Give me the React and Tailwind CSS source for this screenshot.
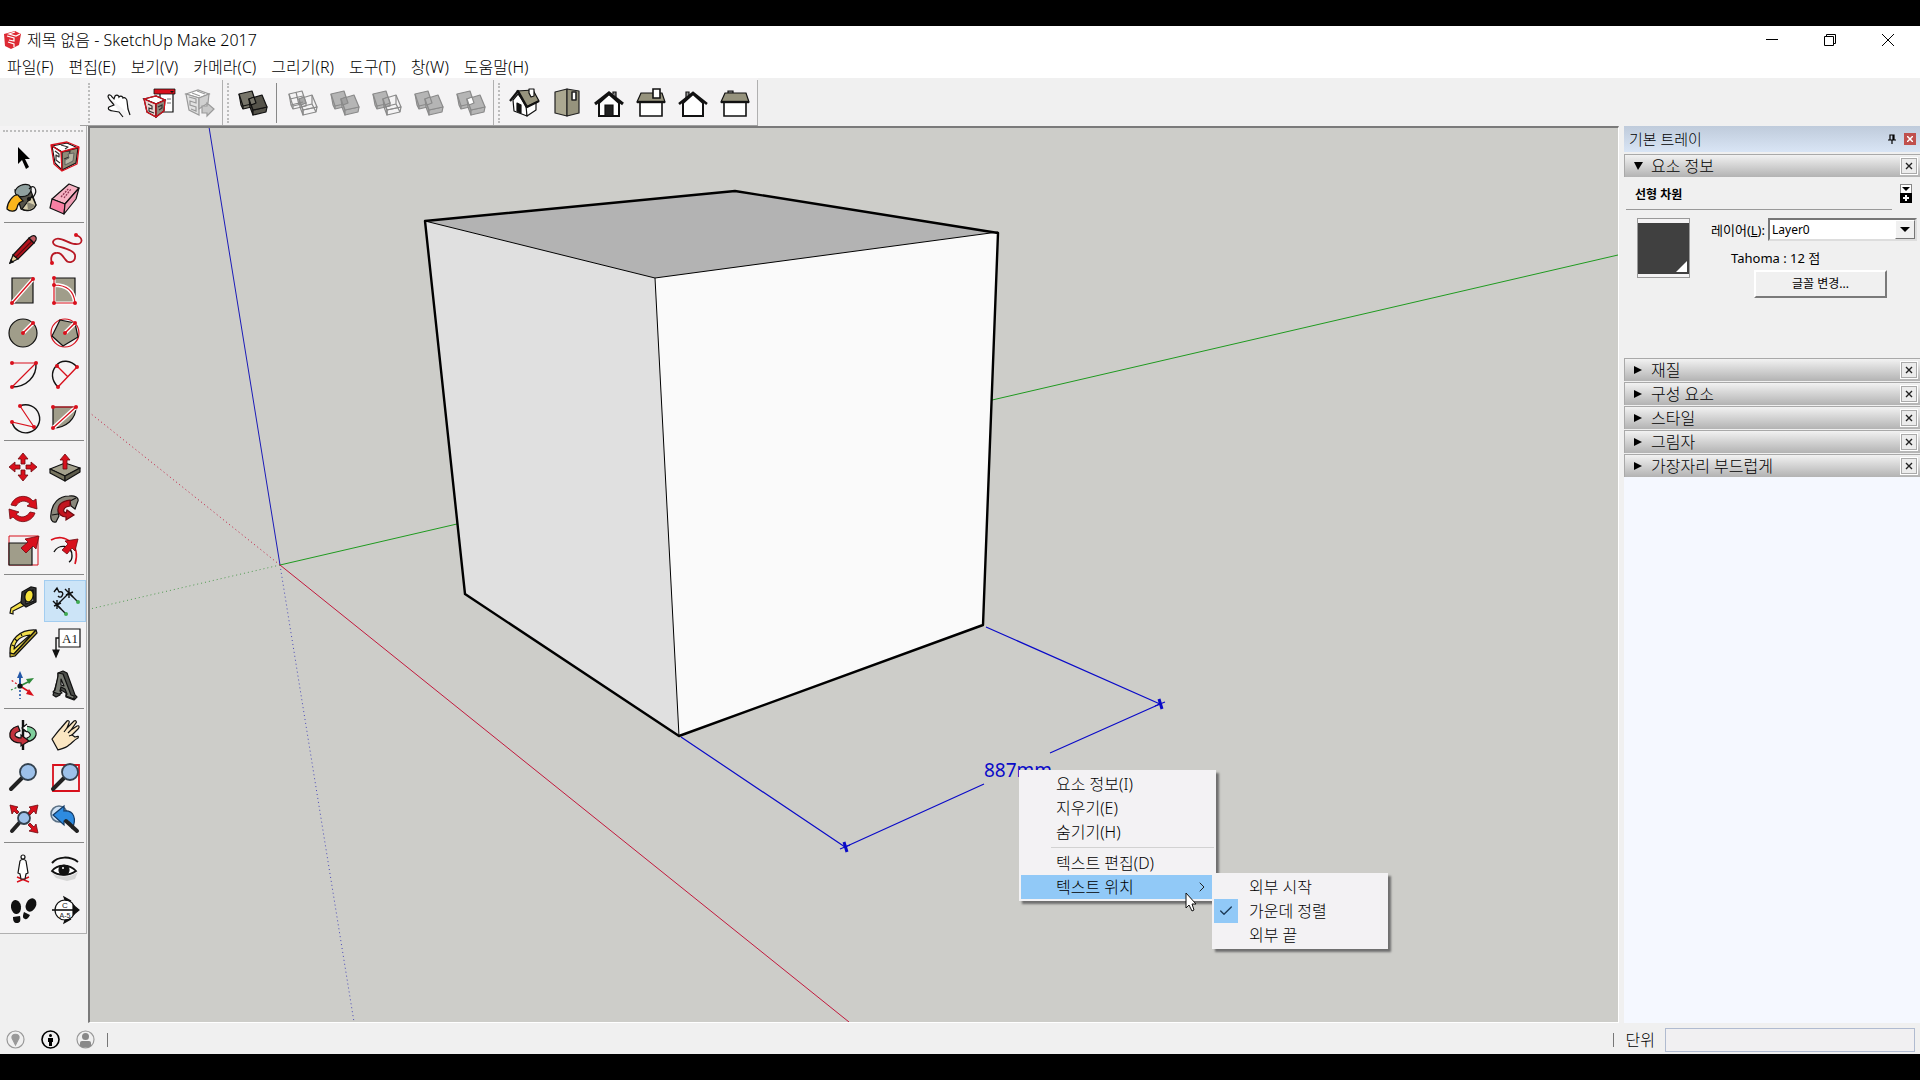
import React, { useState } from "react";
import { Check, ChevronRight } from "lucide-react";
import clsx from "clsx";

const RED = "#d8101c";
const OLIVE = "#a09d8a";

const MENUS = ["파일(F)", "편집(E)", "보기(V)", "카메라(C)", "그리기(R)", "도구(T)", "창(W)", "도움말(H)"];

const TRAY_SECTIONS = ["재질", "구성 요소", "스타일", "그림자", "가장자리 부드럽게"];

const Icon = ({ children }) => (
  <svg viewBox="0 0 42 42" className="w-full h-full" fill="none" stroke="#111" strokeWidth="1.2">
    {children}
  </svg>
);

const Dots = ({ points, r = 2 }) =>
  points.map(([x, y]) => <circle key={`${x}-${y}`} cx={x} cy={y} r={r} fill={RED} stroke="none" />);

/* ===== SOLID TOOLS ===== */
const SolidIcon = ({ back = "#b5b5b5", front = "#b5b5b5", overlap = "#b5b5b5", line = "#8a8a8a" }) => (
  <Icon>
    <g stroke={line} strokeLinejoin="round">
      <path d="M7 12l2 11 2 4 13-3v-3" fill={back} />
      <path d="M7 12l13-3 4 12-13 3z" fill={back} />
      <path d="M11 24v3" />
      <path d="M17 17l1 8 3 8v-5z" fill={front} />
      <path d="M21 28l14-3-1 5-13 3z" fill={front} />
      <path d="M17 17l13-4 5 12-14 3z" fill={front} />
      <path d="M17 17l5-2 2 6-5 2z" fill={overlap} />
      {back === "none" && <path d="M9 23l12-3M14 10l3 13M8 17l13-3" />}
      {front === "none" && <path d="M18 25l12-3 4 8M30 13v9" />}
    </g>
  </Icon>
);

const PointerHandIcon = () => (
  <Icon>
    <path
      d="M11 14c1-2 3-1 4 1l2 2 1-3c2-2 4 0 4 1 2-2 4 0 4 1 2-1 4 1 4 3l1 8 2 6M11 14c0 3 4 6 6 9l-5 2c-2 2 1 4 4 4l6 1 4 5"
      fill="#fff"
    />
  </Icon>
);

const WarehouseIcon = () => (
  <Icon>
    <path d="M21 11h13v19H21z" fill="#fff" />
    <path d="M15 7h21v5H15z" fill={RED} strokeWidth="0.8" />
    <path d="M31 9h4l-2 2z" fill="#111" stroke="none" />
    <path d="M28 17h4M28 21h4" stroke="#777" />
    <path d="M5 17l12-3 9 4-9 4z" fill="#fff" />
    <path d="M5 17l12 5v13L8 30z" fill="#e9d6d2" />
    <path d="M17 22l9-4-1 11-8 6z" fill="#8f887c" />
    <path d="M9 22l4 2v3l-3-1v3l5 2M19 25l4-2v3l-3 2" stroke="#333" />
    <path d="M5 17l12-3 9 4-1 11-8 6-9-5zM5 17l12 5 9-4M17 22v13" stroke={RED} />
  </Icon>
);

const ShareIcon = () => (
  <Icon>
    <g stroke="#9a9a9a">
      <path d="M5 12l12-4 11 4-10 4z" fill="#fff" />
      <path d="M5 12l13 4v17l-10-5z" fill="#e2e2e2" />
      <path d="M18 16l10-4-1 9-9 6z" fill="#d0d0d0" />
      <path d="M8 15l7 2v4l-6-2v4l6 2v4l-5-2M11 11l8 3M16 9l8 3" />
      <path d="M21 24h5v-3l7 6-7 7v-3h-5z" fill="#c8c8c8" />
    </g>
  </Icon>
);

/* ===== CAMERA VIEWS ===== */
const IsoViewIcon = () => (
  <Icon>
    <g strokeLinejoin="round">
      <path d="M9 18l5-6 9 12v10L10 29z" fill="#fff" />
      <path d="M22 24l10-5v9l-9 6z" fill="#fff" />
      <path d="M13 9l16-1 6 11-13 6z" fill="#96937d" />
      <path d="M6 19l8-10 9 16 12-6" strokeWidth="2.2" />
      <path d="M25 7h5v7l-3 1-2-4z" fill="#fff" />
      <path d="M13 21l4 2v8l-4-2z" fill="#111" />
    </g>
  </Icon>
);

const TopViewIcon = () => (
  <Icon>
    <g strokeLinejoin="round" stroke="#222">
      <path d="M9 10l12-3v27L9 31z" fill="#aba891" />
      <path d="M21 7l12 2v22l-12 3z" fill="#96937d" />
      <path d="M26 10h4v8h-4z" fill="#fff" strokeWidth="1.6" />
    </g>
  </Icon>
);

const FrontViewIcon = () => (
  <Icon>
    <path d="M25 12v-2h3v5" fill="#888" />
    <path d="M11 21l10-9 10 9v13H11z" fill="#fff" strokeWidth="2" />
    <path d="M7 22l14-11 14 11" strokeWidth="3" />
    <path d="M17 23h8v11h-8z" fill="#222" />
  </Icon>
);

const RightViewIcon = () => (
  <Icon>
    <path d="M10 20h22v14H10z" fill="#fff" strokeWidth="1.6" />
    <path d="M11 11h21l3 9H7z" fill="#96937d" />
    <path d="M7 20h28" strokeWidth="2.4" />
    <path d="M23 7h7v9h-7z" fill="#fff" strokeWidth="1.6" />
  </Icon>
);

const BackViewIcon = () => (
  <Icon>
    <path d="M14 17v-7h3v5" fill="#999" />
    <path d="M11 21l10-9 10 9v13H11z" fill="#fff" strokeWidth="2" />
    <path d="M7 22l14-11 14 11" strokeWidth="2.6" />
  </Icon>
);

const LeftViewIcon = () => (
  <Icon>
    <path d="M14 11v-2h5v2" fill="#888" />
    <path d="M10 20h22v14H10z" fill="#fff" strokeWidth="1.6" />
    <path d="M11 11h21l3 9H7z" fill="#96937d" />
    <path d="M7 20h28" strokeWidth="2.4" />
  </Icon>
);

/* ===== DRAWING TOOLS ===== */
const SelectIcon = () => (
  <Icon>
    <path d="M16 11v17l4-4 4 9 3-2-4-8h5z" fill="#000" stroke="none" />
  </Icon>
);

const ComponentIcon = () => (
  <Icon>
    <g strokeLinejoin="round">
      <path d="M8 10l15-3 11 5-16 4z" fill="#fff" />
      <path d="M8 10l10 6v18l-7-7z" fill="#fff" />
      <path d="M18 16l16-4-2 15-14 7z" fill="#8f8c78" />
      <path d="M11 15l4 3v3l-3-2v5l4 3M17 9l7 2-3 2M18 16l8-1-1 6-5 2" stroke="#333" />
      <path d="M24 18l6-1-1 8-8 4v-5l4-2z" fill="#b8b5a3" stroke="#555" strokeWidth="0.8" />
      <path d="M7 9l16-3 12 5-2 17-15 7-8-7zM7 9l10 7 18-5M17 16l1 19" stroke={RED} strokeWidth="1.3" />
    </g>
  </Icon>
);

const PaintIcon = () => (
  <Icon>
    <path d="M13 12l16 1 5 14c-3 6-10 7-15 4z" fill="#55534a" />
    <path d="M20 31l10-13 4 9c-2 5-8 7-14 4z" fill="#d8cfae" />
    <path d="M25 24l8 3c-2 3-4 4-7 5z" fill="#8a8674" stroke="none" />
    <path d="M13 14c1-6 9-9 14-7 3 2 3 7-1 10-5 3-12 2-13-3z" fill="#8fa09f" />
    <path d="M27 11c5-6 9 1 5 7l-5 3" />
    <circle cx="27" cy="21" r="1.500" fill="#111" />
    <path d="M16 17c-5-1-11 8-11 14 3 3 9 3 10-1 1-5 3-6 6-7z" fill="#fbb51c" />
  </Icon>
);

const EraserIcon = () => (
  <Icon>
    <g strokeLinejoin="round">
      <path d="M8 21L25 6l10 4-14 16z" fill="#f7b3c4" />
      <path d="M8 21l13 5-1 10-14-6z" fill="#f77fa3" />
      <path d="M21 26l14-16-3 11-12 15z" fill="#ee9db4" />
      <path d="M17 19l8-9M20 20l7-9" stroke="#8c3350" strokeDasharray="2 1" />
    </g>
  </Icon>
);

const PencilIcon = () => (
  <Icon>
    <path d="M8 35l3-8 5 4z" fill="#e7cf9c" />
    <path d="M11 27L27 10l5 5-16 16z" fill="#b3121c" />
    <path d="M14 29l16-16" stroke="#5a0b10" />
    <path d="M27 10l3-2c3-1 5 1 4 4l-2 3z" fill="#c05a62" />
    <path d="M8 35l1-3 2 2z" fill="#111" />
  </Icon>
);

const FreehandIcon = () => (
  <Icon>
    <path
      d="M32 7c8 3 7 10-1 9-6 0-13-7-19-5-5 2-3 6 1 7 6 2 17 4 18 9 1 8-7 9-10 4-3-4-5-7-9-6-4 0-6 5-4 10"
      stroke="#b81824"
      strokeWidth="1.8"
    />
    <Dots points={[[32, 7], [8, 35]]} />
  </Icon>
);

const RectangleIcon = () => (
  <Icon>
    <path d="M10 8h21v25H10z" fill={OLIVE} />
    <path d="M10 33L31 9" stroke="#fff" strokeWidth="4" />
    <path d="M10 33L31 9" stroke={RED} strokeWidth="1.4" />
    <Dots points={[[10, 33], [31, 9]]} />
  </Icon>
);

const RotatedRectIcon = () => (
  <Icon>
    <path d="M10 8h21v25H10z" fill={OLIVE} />
    <path d="M10 15c13 0 20 6 21 18" stroke="#fff" strokeWidth="4" />
    <path d="M10 8v25h21" stroke="#fff" strokeWidth="3" />
    <path d="M10 8v25h21c-1-12-8-18-21-18" stroke={RED} />
    <Dots points={[[10, 8], [10, 15], [10, 33], [31, 33]]} />
  </Icon>
);

const Radius = () => (
  <>
    <path d="M21 21l10-10" stroke="#fff" strokeWidth="4" />
    <path d="M21 21l10-10" stroke={RED} strokeWidth="1.4" />
    <Dots points={[[21, 21], [31, 11]]} />
  </>
);

const CircleIcon = () => (
  <Icon>
    <circle cx="21" cy="21" r="14" fill={OLIVE} />
    <Radius />
  </Icon>
);

const PolygonIcon = () => (
  <Icon>
    <circle cx="21" cy="21" r="14" stroke={RED} />
    <path d="M16 8l15 3 3 14-15 9L8 24z" fill={OLIVE} />
    <Radius />
  </Icon>
);

const ArcIcon = () => (
  <Icon>
    <path d="M34 9c1 14-10 24-24 24" strokeWidth="1.4" />
    <path d="M10 9h24L10 33" stroke={RED} />
    <Dots points={[[10, 9], [34, 9], [10, 33]]} />
  </Icon>
);

const TwoPointArcIcon = () => (
  <Icon>
    <path d="M33 13C27 6 17 5 12 12c-5 6-5 14 2 21" strokeWidth="1.4" />
    <path d="M13 12l11 11M33 13L14 33" stroke={RED} strokeWidth="1.4" />
    <Dots points={[[13, 12], [33, 13], [14, 33]]} />
  </Icon>
);

const ThreePointArcIcon = () => (
  <Icon>
    <path d="M18 10a14 14 0 1 1-8 16" strokeWidth="1.4" />
    <path d="M18 10l14 21-22-5" stroke={RED} />
    <Dots points={[[18, 10], [10, 26], [32, 31]]} />
  </Icon>
);

const PieIcon = () => (
  <Icon>
    <path d="M9 11h23c0 12-10 21-23 21z" fill={OLIVE} />
    <path d="M9 32l23-21" stroke="#fff" strokeWidth="4" />
    <path d="M9 11h23L9 32" stroke={RED} />
    <Dots points={[[9, 11], [32, 11], [9, 32]]} />
  </Icon>
);

/* ===== MODIFY TOOLS ===== */
const MoveIcon = () => (
  <Icon>
    {[0, 90, 180, 270].map((a) => (
      <path
        key={a}
        d="M21 7l5 6h-3v5h-4v-5h-3z"
        fill={RED}
        stroke="#6d0a10"
        strokeWidth="0.8"
        transform={`rotate(${a} 21 21)`}
      />
    ))}
  </Icon>
);

const PushPullIcon = () => (
  <Icon>
    <g strokeLinejoin="round">
      <path d="M6 23l15-6 15 5-15 8z" fill="#a3a08c" />
      <path d="M6 23l15 7v5L6 27z" fill="#77745f" />
      <path d="M21 30l15-8v4l-15 9z" fill="#5d5b4b" />
      <path d="M21 8l5 6h-3v9h-4v-9h-3z" fill={RED} stroke="#6d0a10" strokeWidth="0.8" />
    </g>
  </Icon>
);

const RotateIcon = () => (
  <Icon>
    <g fill={RED} stroke="#6d0a10" strokeWidth="0.8">
      <path d="M9 17c3-9 15-12 22-4l3-2 1 10-10-3 3-2c-5-5-11-3-14 2z" />
      <path d="M33 25c-3 9-15 12-22 4l-3 2-1-10 10 3-3 2c5 5 11 3 14-2z" />
    </g>
  </Icon>
);

const FollowMeIcon = () => (
  <Icon>
    <path d="M12 34c-4 1-6-3-5-8C8 15 15 8 25 8c6-1 10 2 9 5l-3 8-4-3-1-5c-8 0-14 6-11 15z" fill="#8a887c" />
    <path d="M8 27l6-1M26 13l6-3" />
    <path d="M26 12c-8 1-12 5-12 10 0 4 4 7 8 7v3l8-5-7-5-1 3c-4-1-3-6 4-7z" fill="#c2151f" stroke="#6d0a10" />
  </Icon>
);

const ScaleIcon = () => (
  <Icon>
    <path d="M7 6h29v29H7z" stroke={RED} strokeWidth="1" />
    <path d="M7 13h23v22H7z" fill={OLIVE} />
    <path d="M37 6l-3 13-3-3-7 7-5-5 7-6-3-3z" fill={RED} stroke="#6d0a10" strokeWidth="0.8" />
  </Icon>
);

const OffsetIcon = () => (
  <Icon>
    <path d="M7 10c14-8 30 5 24 24" stroke={RED} strokeWidth="1.6" />
    <path d="M10 22c4-8 18-8 18 4 0 3-1 5-3 6" strokeWidth="1.4" />
    <path d="M34 9l-3 12-3-3-5 6-5-4 6-6-3-3z" fill={RED} stroke="#6d0a10" strokeWidth="0.8" />
  </Icon>
);

/* ===== MEASURE TOOLS ===== */
const TapeIcon = () => (
  <Icon>
    <path d="M9 28l13-8 3 4-14 7v3l-3-1z" fill="#f4e04b" />
    <path d="M20 12l9-5 5 1v14l-10 5-5-4z" fill="#333" />
    <path d="M23 13l8-3 1 11-8 3z" fill="#8f8f8f" />
    <ellipse cx="27" cy="16" rx="4" ry="6" fill="#f6e23c" transform="rotate(15 27 16)" />
  </Icon>
);

const DimensionIcon = () => (
  <Icon>
    <path d="M13 25l12-12M13 25l9 9M25 13l9 9" strokeWidth="1.4" />
    <path d="M9 21l8 8M10 26l7-3M13 20v9M21 9l8 8M22 15l7-3M25 8v10" strokeWidth="1.4" />
    <path d="M10 12l3-4 2 4c3-1 5 1 3 4-1 2-3 1-4 0" strokeWidth="1.4" />
    <circle cx="22" cy="34" r="2" fill="#3faa52" stroke="none" />
    <circle cx="34" cy="22" r="2" fill="#3faa52" stroke="none" />
  </Icon>
);

const ProtractorIcon = () => (
  <Icon>
    <g strokeLinejoin="round">
      <path d="M8 31C7 18 18 7 34 8L12 32z" fill="#f1dd4c" />
      <path d="M34 8l1 3L13 34l-5 1v-4l4 1z" fill="#b8a32c" />
      <path d="M12 27c1-8 6-13 16-14z" fill="#f4f2f3" />
      <path d="M10 23l2 1M13 17l2 2M19 12l1 2" />
    </g>
  </Icon>
);

const TextIcon = () => (
  <Icon>
    <path d="M15 7h21v18H15z" fill="#fff" />
    <path d="M15 16h-3v14" strokeWidth="1.4" />
    <path d="M9 28h6l-3 7z" fill="#111" />
    <text x="26" y="21" textAnchor="middle" fontSize="13" fill="#222" stroke="none" fontFamily="Liberation Serif, serif">
      A1
    </text>
  </Icon>
);

const AxesIcon = () => (
  <Icon>
    <path d="M18 22v13" stroke="#2458a8" strokeWidth="1.6" strokeDasharray="2 2" />
    <path d="M18 22l-9 4" stroke="#2f8b3b" strokeDasharray="2 2" />
    <path d="M18 22l-9-6" stroke={RED} strokeDasharray="2 2" />
    <path d="M18 22V12" stroke="#2458a8" strokeWidth="2" />
    <path d="M18 7l3 7h-6z" fill="#2458a8" stroke="none" />
    <path d="M18 22l8-4" stroke="#2f8b3b" strokeWidth="1.6" />
    <path d="M32 14l-5 6-3-5z" fill="#2f8b3b" stroke="none" />
    <path d="M18 22l8 5" stroke={RED} strokeWidth="1.6" />
    <path d="M32 32l-8-2 3-5z" fill={RED} stroke="none" />
    <circle cx="18" cy="22" r="2" fill="#111" />
  </Icon>
);

const Text3DIcon = () => (
  <Icon>
    <g strokeLinejoin="round">
      <path d="M14 9l5-2 4 2 8 22 2 2-3 3-8-3v-4l-5-3-1 5-4 2-3-2 1-3 4-14z" fill="#4b4d49" />
      <path d="M14 9l5 1 8 21 3 1v3l-8-3 1-2-2-5-4-2-1 4 2 2-3 1-6-2 2-2 3-14z" fill="#777a72" />
      <path d="M17 15l3 7-3-1z" fill="#f4f2f3" />
    </g>
  </Icon>
);

/* ===== CAMERA TOOLS ===== */
const OrbitIcon = () => (
  <Icon>
    <path d="M21 6v30" strokeWidth="2.4" />
    <path d="M22 12c8 0 13 4 12 9-1 4-5 6-9 7v-4c3-1 4-3 3-4-1-2-3-3-6-3z" fill="#7fcf9c" />
    <path d="M16 12C9 14 7 18 8 23c2 5 6 6 11 6v3l8-5-8-6v3c-4 0-6-2-6-3 0-2 2-3 5-4z" fill="#c2323c" />
    <path d="M25 10l-5 4 5 4" fill="#fff" />
  </Icon>
);

const PanIcon = () => (
  <Icon>
    <path
      d="M8 25c4-5 6-8 9-11l6-7c1-1 3 0 2 2l-2 5 7-7c2-1 3 1 2 2l-5 7 6-4c2-1 3 1 1 3l-6 6 3 2c3-1 4-1 3 1-4 2-6 5-9 7-3 3-8 4-11 5z"
      fill="#fbe6c2"
    />
    <path d="M23 14l-3 4M27 16l-3 3M28 21l-3 1" />
  </Icon>
);

const Lens = ({ cx = 26, cy = 16, r = 8, hx = 9, hy = 33 }) => (
  <>
    <path d={`M${cx - r + 2} ${cy + r - 2}L${hx} ${hy}`} stroke="#222" strokeWidth="4" strokeLinecap="round" />
    <circle cx={cx} cy={cy} r={r} fill="#9dc1ea" stroke="#33414e" strokeWidth="1.8" />
  </>
);

const ZoomIcon = () => (
  <Icon>
    <Lens />
  </Icon>
);

const ZoomWindowIcon = () => (
  <Icon>
    <path d="M9 9h26v26H9z" stroke={RED} strokeWidth="1.8" />
    <Lens />
  </Icon>
);

const ZoomExtentsIcon = () => (
  <Icon>
    <Lens cx={22} cy={20} r={6} hx={10} hy={33} />
    <g fill={RED} stroke="#6d0a10" strokeWidth="0.8">
      <path d="M8 7l8 2-2 2 3 3-2 2-3-3-2 3z" />
      <path d="M36 7l-2 9-2-3-4 4-2-2 3-4-2-2z" />
      <path d="M36 35l-9-2 3-2-4-4 2-2 4 4 2-3z" />
    </g>
  </Icon>
);

const PreviousIcon = () => (
  <Icon>
    <circle cx="15" cy="16" r="8" fill="#cfe1f4" stroke="#5b7185" strokeWidth="1.6" />
    <path d="M9 17l11-9v5c10-1 13 8 8 18 0-5-1-8-8-8v4z" fill="#2e8be0" stroke="#123a66" />
    <path d="M22 23l11 10" stroke="#222" strokeWidth="4" strokeLinecap="round" />
  </Icon>
);

const PersonIcon = () => (
  <Icon>
    <path d="M15 34l12-5M15 29l12 5" stroke={RED} strokeWidth="1.4" />
    <circle cx="21" cy="9" r="2" fill="#fff" />
    <path d="M18 13c1-2 5-2 6 0l2 12-2 1-1 5h-4l-1-5-2-1z" fill="#fff" />
  </Icon>
);

const EyeIcon = () => (
  <Icon>
    <path d="M7 24c6 6 19 6 27 0l-3 7-8 2-11-3z" fill="#d6d6d6" stroke="none" />
    <path d="M8 15c6-7 18-7 26-1" strokeWidth="2" />
    <path d="M8 23c5-7 18-7 24 0-7 5-18 5-24 0z" fill="#fff" strokeWidth="1.8" />
    <circle cx="20" cy="22" r="5" fill="#111" />
    <circle cx="19" cy="20" r="1" fill="#fff" stroke="none" />
  </Icon>
);

const FeetIcon = () => (
  <Icon>
    <g fill="#111" stroke="none">
      <ellipse cx="14" cy="17" rx="5" ry="7" transform="rotate(-8 14 17)" />
      <path d="M11 27l7-1c1 5 0 7-3 7s-4-2-4-6z" />
      <ellipse cx="29" cy="15" rx="5" ry="7" transform="rotate(25 29 15)" />
      <path d="M22 22l6 3c-2 4-4 5-5 4-3-1-2-4-1-7z" />
    </g>
  </Icon>
);

const SectionIcon = () => (
  <Icon>
    <circle cx="21" cy="20" r="10" fill="#fff" />
    <path d="M8 20h26" strokeWidth="1.6" />
    <path d="M29 15l6 5-6 5zM20 7l7 4-6-1zM20 33l7-4-6 1z" fill="#111" />
    <text x="21" y="18" textAnchor="middle" fontSize="8" fill="#222" stroke="none" fontFamily="Liberation Sans, sans-serif">
      C
    </text>
    <text x="21" y="28" textAnchor="middle" fontSize="7" fill="#222" stroke="none" fontFamily="Liberation Sans, sans-serif">
      A-5
    </text>
  </Icon>
);

const TOOL_GROUPS = [
  [
    ["선택", SelectIcon],
    ["구성 요소 만들기", ComponentIcon],
    ["페인트 통", PaintIcon],
    ["지우개", EraserIcon],
  ],
  [
    ["선", PencilIcon],
    ["자유 그리기", FreehandIcon],
    ["직사각형", RectangleIcon],
    ["회전된 직사각형", RotatedRectIcon],
    ["원", CircleIcon],
    ["다각형", PolygonIcon],
    ["호", ArcIcon],
    ["2점 호", TwoPointArcIcon],
    ["3점 호", ThreePointArcIcon],
    ["파이", PieIcon],
  ],
  [
    ["이동", MoveIcon],
    ["밀기/끌기", PushPullIcon],
    ["회전", RotateIcon],
    ["따라가기", FollowMeIcon],
    ["배율", ScaleIcon],
    ["오프셋", OffsetIcon],
  ],
  [
    ["줄자 도구", TapeIcon],
    ["치수", DimensionIcon],
    ["각도기", ProtractorIcon],
    ["텍스트", TextIcon],
    ["축", AxesIcon],
    ["3D 텍스트", Text3DIcon],
  ],
  [
    ["궤도", OrbitIcon],
    ["이동/표시", PanIcon],
    ["확대/축소", ZoomIcon],
    ["창 확대", ZoomWindowIcon],
    ["범위 확대", ZoomExtentsIcon],
    ["이전", PreviousIcon],
  ],
  [
    ["카메라 배치", PersonIcon],
    ["둘러보기", EyeIcon],
    ["걷기", FeetIcon],
    ["단면", SectionIcon],
  ],
];

const ToolButton = ({ label, active, onClick, children }) => (
  <button
    title={label}
    aria-label={label}
    onClick={onClick}
    className={clsx("w-[42px] h-[42px] shrink-0", active && "bg-[#cce4f7] outline outline-[#a3cdf0] -outline-offset-1")}
  >
    {children}
  </button>
);

const Grip = () => <div className="h-10 border-l-2 border-dotted border-[#bdbdbd]" />;

const TopToolbar = () => (
  <div className="flex h-12 bg-[#f0f0f0]">
    <div className="w-20 shrink-0" />
    <div className="flex items-center pt-[2px] bg-[#f4f3f4] border-b border-[#a0a0a0]">
      <div className="flex items-center gap-[7px] h-full pl-2 border-r border-[#b0b0b0]">
        <Grip />
        <div className="flex w-[125px]">
          <ToolButton label="상호 작용"><PointerHandIcon /></ToolButton>
          <ToolButton label="3D Warehouse"><WarehouseIcon /></ToolButton>
          <ToolButton label="구성 요소 공유"><ShareIcon /></ToolButton>
        </div>
      </div>
      <div className="flex items-center h-full pl-1 border-r border-[#b0b0b0]">
        <Grip />
        <div className="flex items-center pl-[3px] pr-px">
          <ToolButton label="외부 쉘">
            <SolidIcon back="#77756a" front="#55534a" overlap="#77756a" line="#111" />
          </ToolButton>
          <div className="w-2 h-10 flex"><div className="ml-[2px] border-l border-[#888]" /></div>
          <ToolButton label="교차"><SolidIcon back="none" front="none" overlap="#a8a8a8" /></ToolButton>
          <ToolButton label="결합"><SolidIcon overlap="#a0a0a0" /></ToolButton>
          <ToolButton label="빼기"><SolidIcon front="none" /></ToolButton>
          <ToolButton label="트리밍"><SolidIcon /></ToolButton>
          <ToolButton label="분할"><SolidIcon overlap="#fff" /></ToolButton>
        </div>
      </div>
      <div className="flex items-center h-full pl-1 border-r border-[#b0b0b0]">
        <Grip />
        <div className="flex pl-1 pr-px">
          <ToolButton label="등각"><IsoViewIcon /></ToolButton>
          <ToolButton label="상단"><TopViewIcon /></ToolButton>
          <ToolButton label="앞"><FrontViewIcon /></ToolButton>
          <ToolButton label="오른쪽"><RightViewIcon /></ToolButton>
          <ToolButton label="뒤"><BackViewIcon /></ToolButton>
          <ToolButton label="왼쪽"><LeftViewIcon /></ToolButton>
        </div>
      </div>
    </div>
  </div>
);

const ToolPalette = () => {
  const [tool, setTool] = useState("치수");

  return (
    <div className="w-[88px] shrink-0">
      <div className="w-[87px] pt-1 pb-px pl-[2px] bg-[#f4f3f4] border-r border-b border-[#b0b0b0]">
        <div className="w-20 h-[6px] mx-px border-t-2 border-dotted border-[#bdbdbd]" />
        {TOOL_GROUPS.map((group, i) => (
          <div key={i}>
            {i > 0 && (
              <div className="h-2 pt-[2px] px-[2px]">
                <hr className="w-20 border-t border-[#888]" />
              </div>
            )}
            <div className="grid grid-cols-[42px_42px]">
              {group.map(([label, Glyph]) => (
                <ToolButton key={label} label={label} active={tool === label} onClick={() => setTool(label)}>
                  <Glyph />
                </ToolButton>
              ))}
            </div>
          </div>
        ))}
      </div>
    </div>
  );
};

/* ===== MODEL VIEW ===== */
const Scene = () => (
  <svg
    viewBox="90 128 1528 894"
    preserveAspectRatio="xMinYMin slice"
    className="block w-full h-full"
    fill="none"
    strokeLinejoin="round"
  >
    <g strokeWidth="1">
      <path d="M209 127L280 565" stroke="#1a1ab8" />
      <path d="M280 565L354 1022" stroke="#4a4ab8" strokeDasharray="1 3" />
      <path d="M280 565L1618 255" stroke="#1f9a1f" />
      <path d="M280 565L90 609" stroke="#4f9a4f" strokeDasharray="1 3" />
      <path d="M280 565L849 1022" stroke="#c2183c" />
      <path d="M280 565L90 413" stroke="#c2183c" strokeDasharray="1 3" />
    </g>
    <path d="M425 221l310-30 263 41-343 46z" fill="#b3b3b3" />
    <path d="M425 221l230 57 24 457-214-141z" fill="#e0e0e0" />
    <path d="M655 278l343-46-15 393-304 111z" fill="#fafafa" />
    <path d="M425 221l230 57 343-46M655 278l24 458" stroke="#000" />
    <path d="M425 221l310-30 263 42-15 392-304 111-214-142z" stroke="#000" strokeWidth="2.4" />
    <g stroke="#0a0ac8" strokeWidth="1.2">
      <path d="M986 627l174 77-110 49M984 784l-139 63-164-110" />
      <path d="M1159 699l3 10M844 842l3 10" strokeWidth="3" />
      <path d="M1155 706l10-4M840 849l10-4" />
    </g>
    <text x="984" y="777" fontSize="19" fontWeight="400" fill="#0a0ac8" fontFamily="Noto Sans, sans-serif">
      887mm
    </text>
  </svg>
);

const MenuItem = ({ children, active, checked, submenu }) => (
  <button
    role={checked ? "menuitemcheckbox" : "menuitem"}
    aria-checked={checked}
    aria-haspopup={submenu ? "menu" : undefined}
    className={clsx("flex items-center w-full h-6 text-left whitespace-nowrap", active && "bg-[#91c9f7]")}
  >
    <span className={clsx("flex items-center justify-center w-6 h-6 mr-[11px]", checked && "bg-[#91c9f7]")}>
      {checked && <Check size={16} strokeWidth={2} className="text-[#1c3a57]" />}
    </span>
    <span className="flex-1">{children}</span>
    {submenu && <ChevronRight size={16} strokeWidth={1.5} className="mr-1 text-[#222]" />}
  </button>
);

const Viewport = () => (
  <main className="relative flex-1 min-w-0 overflow-hidden bg-[#cdcdc9] border-t-2 border-l-2 border-r border-b border-t-[#7a7a7a] border-l-[#7a7a7a] border-r-white border-b-white">
    <div className="absolute inset-0">
      <Scene />
    </div>

    <div
      role="menu"
      className="absolute left-[929px] top-[642px] w-[197px] p-[2px] bg-[#f3f2f4] shadow-[3px_3px_2px_#6f6f6f]"
    >
      <MenuItem>요소 정보(I)</MenuItem>
      <MenuItem>지우기(E)</MenuItem>
      <MenuItem>숨기기(H)</MenuItem>
      <hr className="ml-[30px] my-[3px] border-t border-[#d2d2d2]" />
      <MenuItem>텍스트 편집(D)</MenuItem>
      <MenuItem active submenu>텍스트 위치</MenuItem>
    </div>

    <div
      role="menu"
      className="absolute left-[1122px] top-[745px] w-[176px] p-[2px] bg-[#f3f2f4] shadow-[3px_3px_2px_#6f6f6f]"
    >
      <MenuItem>외부 시작</MenuItem>
      <MenuItem checked>가운데 정렬</MenuItem>
      <MenuItem>외부 끝</MenuItem>
    </div>

    {/* mouse pointer */}
    <svg viewBox="0 0 12 20" className="absolute left-[1095px] top-[764px] w-3 h-5">
      <path d="M1 1v15l3-3 3 6 2-1-2-6h4z" fill="#fff" stroke="#111" />
    </svg>
  </main>
);

/* ===== TRAY ===== */
const CloseBox = ({ label }) => (
  <button
    aria-label={`${label} 닫기`}
    className="flex items-center justify-center w-4 h-4 mr-[3px] bg-[#ececec] border border-[#aaa] outline outline-white"
  >
    <svg viewBox="0 0 8 8" className="w-2 h-2" stroke="#222" strokeWidth="1.4">
      <path d="M1 1l6 6M7 1l-6 6" />
    </svg>
  </button>
);

const SectionHeader = ({ title, open }) => (
  <div className="flex items-center h-[23px] bg-linear-to-b from-[#f2f2f2] to-[#b3b3b3] border-t border-l border-[#a9a9a9]">
    <button aria-expanded={!!open} className="flex flex-1 items-center gap-2 h-full pl-2 leading-5 text-left">
      <svg viewBox="0 0 10 10" className="w-[10px] h-[10px]" fill="#000">
        <path d={open ? "M1 1h9L5 9z" : "M1 1l8 4-8 4z"} />
      </svg>
      {title}
    </button>
    <CloseBox label={title} />
  </div>
);

const EntityInfo = () => {
  const [layer, setLayer] = useState("Layer0");

  return (
    <section className="h-[181px] pt-[5px] font-normal">
      <div className="flex items-start justify-between pr-2">
        <div className="w-[266px] h-7 ml-[2px] pl-[9px] pt-[5px] text-xs font-bold border-b border-[#999]">선형 차원</div>
        <button aria-label="세부 정보" className="mt-[2px]">
          <svg viewBox="0 0 12 19" className="w-3 h-[19px]">
            <path d="M0 0h12v19H0z" fill="#888" />
            <path d="M1 1h10v8H1z" fill="#fff" />
            <path d="M2 3h8l-4 4zM0 9h12v10H0z" fill="#000" />
            <path d="M3 14h6M6 11v6" stroke="#fff" strokeWidth="2" />
          </svg>
        </button>
      </div>

      <div className="flex pt-2">
        <button
          aria-label="재질"
          className="flex flex-col justify-center w-[53px] h-[60px] ml-[13px] border border-[#999] bg-[#f4f3f4]"
        >
          <svg viewBox="0 0 51 51" className="w-full">
            <path d="M0 0h51v51H0z" fill="#404040" />
            <path d="M49 38v11H38z" fill="#fff" />
          </svg>
        </button>

        <div className="flex-1 pr-[3px]">
          <div className="flex items-center justify-end gap-[3px]">
            <label htmlFor="layer" className="text-[13px] leading-5">
              레이어(<u>L</u>):
            </label>
            <div className="relative w-[149px] h-[23px] bg-white border-2 border-t-[#777] border-l-[#777] border-r-[#ddd] border-b-[#ddd]">
              <select
                id="layer"
                value={layer}
                onChange={(e) => setLayer(e.target.value)}
                className="block w-full h-full pl-[2px] text-xs leading-4 appearance-none"
              >
                <option>Layer0</option>
              </select>
              <span className="absolute right-0 top-0 flex items-center justify-center w-5 h-[19px] bg-[#f0f0f0] border border-t-white border-l-white border-r-[#777] border-b-[#777] pointer-events-none">
                <svg viewBox="0 0 10 5" className="w-[10px] h-[5px]">
                  <path d="M0 0h10L5 5z" />
                </svg>
              </span>
            </div>
          </div>
          <div className="pt-[7px] pl-[41px] text-[13px] leading-5">Tahoma : 12 점</div>
          <button className="block w-[133px] h-7 ml-16 mt-[2px] text-xs bg-[#f0f0f0] border-2 border-t-white border-l-white border-r-[#7a7a7a] border-b-[#7a7a7a]">
            글꼴 변경...
          </button>
        </div>
      </div>
    </section>
  );
};

const Tray = () => (
  <aside className="flex flex-col w-[296px] ml-[5px] shrink-0">
    <div className="flex items-center h-[26px] mb-[2px] pl-[5px] bg-linear-to-b from-[#bfcbdb] to-[#d9e5f5]">
      <h2 className="flex-1 text-[15px] leading-5">기본 트레이</h2>
      <button aria-label="고정" className="mr-2">
        <svg viewBox="0 0 8 10" className="w-2 h-[10px]" fill="none" stroke="#000">
          <path d="M2 6V1h4v5M0 6h8M4 6v4M5 1v5" strokeWidth="1.2" />
        </svg>
      </button>
      <button aria-label="닫기" className="flex items-center justify-center w-3 h-3 mr-1 bg-[#c0504d]">
        <svg viewBox="0 0 6 6" className="w-[6px] h-[6px]" stroke="#fff" strokeWidth="1.5">
          <path d="M0 0l6 6M6 0L0 6" />
        </svg>
      </button>
    </div>
    <SectionHeader title="요소 정보" open />
    <EntityInfo />
    <div className="flex flex-col gap-px">
      {TRAY_SECTIONS.map((title) => (
        <SectionHeader key={title} title={title} />
      ))}
    </div>
    <div className="flex-1 bg-[#f5f8ff]" />
  </aside>
);

const StatusBar = () => (
  <footer className="flex items-center h-[31px] pt-[2px] pl-[6px] pr-[5px] bg-[#f0f0f0]">
    <div className="flex gap-4">
      <button aria-label="지리적 위치">
        <svg viewBox="0 0 19 19" className="w-[19px] h-[19px]" fill="none" stroke="#999" strokeWidth="1.2">
          <circle cx="9.500" cy="9.500" r="8.500" />
          <path d="M9.500 15L6 8c-1-5 8-5 7 0z" fill="#999" />
        </svg>
      </button>
      <button aria-label="제작자">
        <svg viewBox="0 0 19 19" className="w-[19px] h-[19px]" fill="none" stroke="#000" strokeWidth="1.6">
          <circle cx="9.500" cy="9.500" r="8.500" />
          <circle cx="9.500" cy="5.500" r="1.500" fill="#000" stroke="none" />
          <path d="M7 8h5v4h-1v4H8v-4H7z" fill="#000" stroke="none" />
        </svg>
      </button>
      <button aria-label="로그인">
        <svg viewBox="0 0 19 19" className="w-[19px] h-[19px]" fill="none" stroke="#999" strokeWidth="1.2">
          <circle cx="9.500" cy="9.500" r="8.500" />
          <circle cx="9.500" cy="6.500" r="3.500" fill="#888" stroke="none" />
          <path d="M4 16v-3c0-2 2-2 3-2h5c1 0 3 0 3 2v3c-3 2-8 2-11 0z" fill="#888" stroke="none" />
        </svg>
      </button>
    </div>
    <div className="h-[14px] ml-3 border-l border-[#777]" />
    <div className="flex-1" />
    <div className="h-[14px] mr-3 border-l border-[#777]" />
    <label htmlFor="measurement" className="mr-[10px]">단위</label>
    <input id="measurement" className="w-[250px] h-6 px-1 border border-[#b0bbd0] bg-[#f1f0f2]" />
  </footer>
);

const TitleBar = () => (
  <header className="flex items-center h-7 pl-1 pr-[3px] bg-white">
    <svg viewBox="0 0 18 20" className="w-[18px] h-5" fill="#dd2a33">
      <path d="M0 4l11-3 6 3-2 11-8 4-6-3z" />
      <path d="M3 6l7 2v3l-5-1M4 12l6 2v3M11 2l-6 2 7 2 4-2" fill="none" stroke="#fff" strokeWidth="1.2" />
    </svg>
    <h1 className="flex-1 ml-[5px]">제목 없음 - SketchUp Make 2017</h1>
    <button aria-label="최소화" className="flex justify-center w-[58px] h-3">
      <svg viewBox="0 0 12 12" className="w-3 h-3" stroke="#000">
        <path d="M0 5.500h12" />
      </svg>
    </button>
    <button aria-label="이전 크기로 복원" className="flex justify-center w-[58px] h-3">
      <svg viewBox="0 0 12 12" className="w-3 h-3" fill="none" stroke="#000">
        <path d="M0.500 2.500h9v9h-9zM2.500 2V0.500h9v9H10" />
      </svg>
    </button>
    <button aria-label="닫기" className="flex justify-center w-[58px] h-3">
      <svg viewBox="0 0 12 12" className="w-3 h-3" stroke="#000">
        <path d="M0 0l12 12M12 0L0 12" />
      </svg>
    </button>
  </header>
);

const App = () => (
  <div className="flex flex-col h-screen py-[26px] overflow-hidden bg-black text-black text-base leading-6 font-light font-['Noto_Sans','Noto_Sans_CJK_KR',sans-serif]">
    <TitleBar />
    <nav className="flex gap-[15px] h-6 pt-px pl-[7px] bg-white">
      {MENUS.map((name) => (
        <button key={name} className="whitespace-nowrap">
          {name}
        </button>
      ))}
    </nav>
    <TopToolbar />
    <div className="flex flex-1 min-h-0 bg-[#f0f0f0]">
      <ToolPalette />
      <Viewport />
      <Tray />
    </div>
    <StatusBar />
  </div>
);

export default App;
